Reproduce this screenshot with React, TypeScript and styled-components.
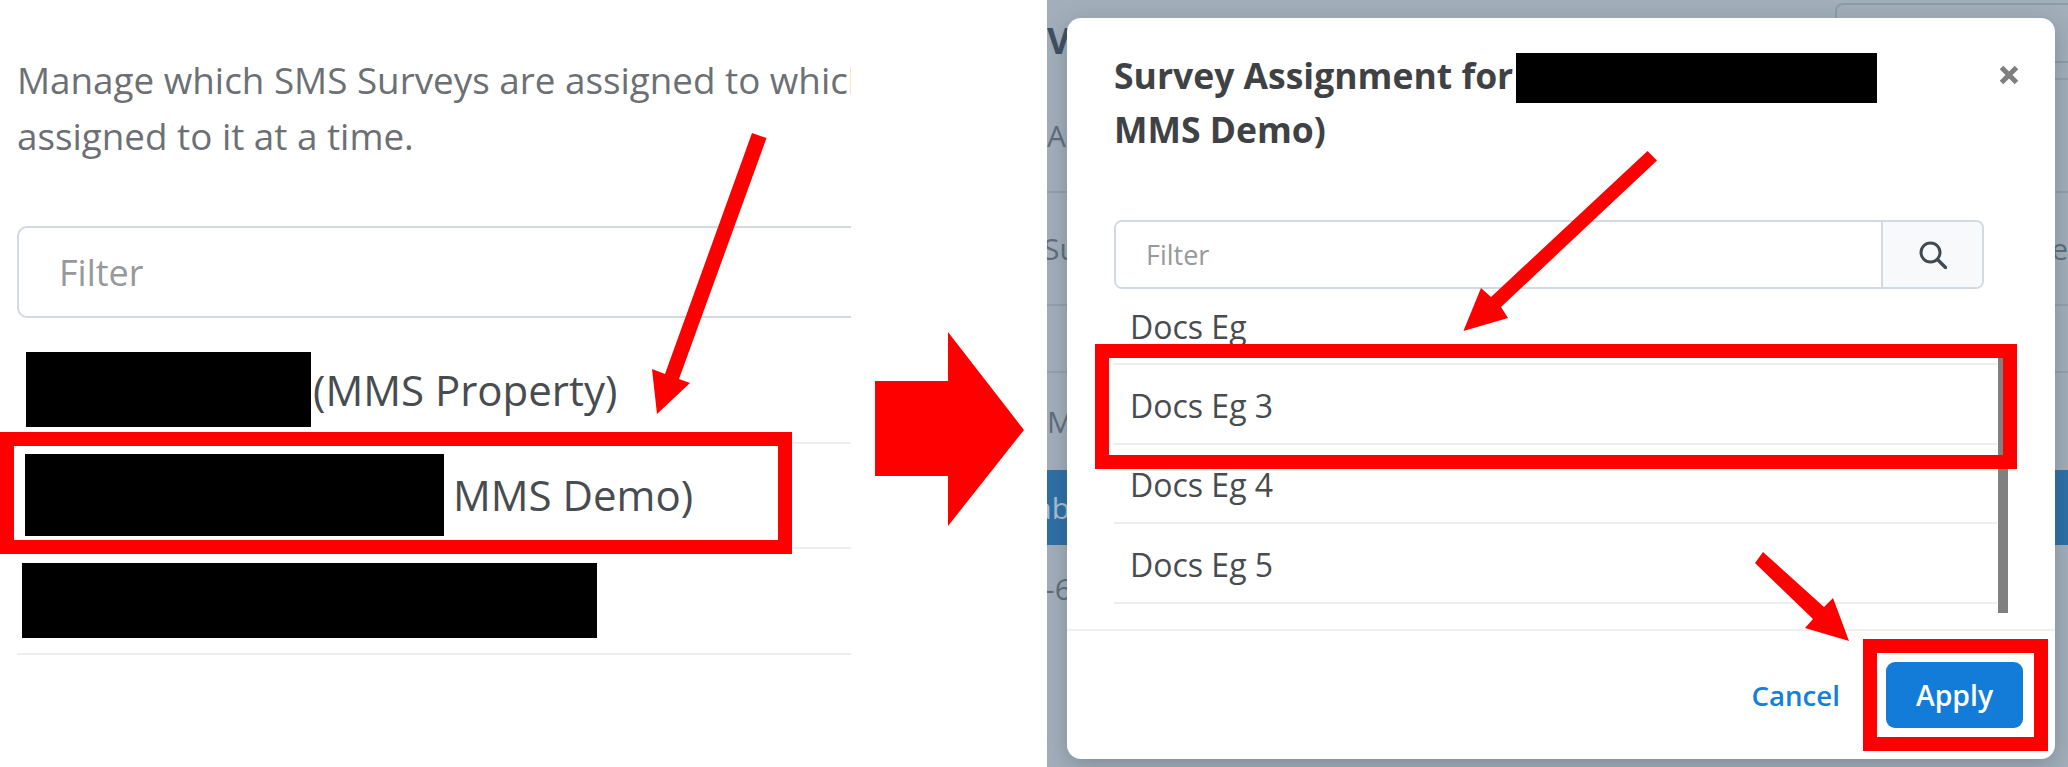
import React from "react";
import styled, { createGlobalStyle } from "styled-components";

const Global = createGlobalStyle`
  html, body { margin: 0; padding: 0; background: #fff; }
  * { box-sizing: border-box; }
  input::placeholder { opacity: 1; color: #97999b; }
`;

const Page = styled.div`
  position: relative;
  display: flex;
  width: 2068px;
  height: 767px;
  overflow: hidden;
  background: #fff;
  font-family: "Open Sans", "Noto Sans", sans-serif;
`;

const LeftPane = styled.section`
  width: 851px;
  flex: none;
  padding: 52px 0 0 17px;
  overflow: hidden;
`;

const Intro = styled.p`
  margin: 0 0 62px;
  font-size: 36.8px;
  line-height: 56px;
  color: #6c7075;
  white-space: nowrap;
`;

const WideFilter = styled.input`
  display: block;
  width: 900px;
  height: 92px;
  padding: 0 0 0 40px;
  border: 2px solid #d3d9e0;
  border-radius: 10px;
  background: #fff;
  font: 400 36px "Open Sans", sans-serif;
  outline: none;
`;

const PropertyList = styled.div`
  margin-top: 21px;
`;

const PropertyRow = styled.div<{ $height: number; $inset: number; $gap: number }>`
  position: relative;
  display: flex;
  align-items: center;
  gap: ${(p) => p.$gap}px;
  height: ${(p) => p.$height}px;
  padding: 0 0 2px ${(p) => p.$inset}px;
  border-bottom: 2px solid #eceef0;
  font-size: 42px;
  color: #484c50;
  white-space: nowrap;
`;

const Redacted = styled.span<{ $w: number; $h: number }>`
  display: inline-block;
  flex: none;
  width: ${(p) => p.$w}px;
  height: ${(p) => p.$h}px;
  background: #000;
`;

const Highlight = styled.div<{ $l: number; $t: number; $w: number; $h: number }>`
  position: absolute;
  left: ${(p) => p.$l}px;
  top: ${(p) => p.$t}px;
  width: ${(p) => p.$w}px;
  height: ${(p) => p.$h}px;
  border: 14px solid #ff0000;
  pointer-events: none;
`;

const ArrowSlot = styled.div`
  width: 196px;
  flex: none;
  padding: 332px 0 0 24px;
`;

const RightPane = styled.section`
  position: relative;
  flex: 1;
  overflow: hidden;
  background: #a2afba;
`;

const BackRow = styled.div<{ $h: number; $rule?: boolean; $band?: boolean }>`
  display: flex;
  align-items: center;
  justify-content: space-between;
  height: ${(p) => p.$h}px;
  font-size: 30px;
  white-space: nowrap;
  color: ${(p) => (p.$band ? "#a9bfd2" : "#5f6e7b")};
  background: ${(p) => (p.$band ? "#2e70a6" : "transparent")};
  border-bottom: ${(p) => (p.$rule ? "2px solid #93a1ad" : "0")};
`;

const BackHeading = styled.span`
  font-size: 36px;
  font-weight: 700;
  color: #3e5062;
`;

const HeaderRuleRow = styled.div`
  position: relative;
  display: flex;
  align-items: center;
  height: 80px;
`;

const HeaderRule = styled.span`
  margin-left: auto;
  align-self: flex-end;
  width: 20px;
  height: 2px;
  background: #93a1ad;
`;

const BackOutline = styled.span`
  position: absolute;
  left: 788px;
  top: 3px;
  width: 300px;
  height: 60px;
  border: 2px solid #8d9ca9;
  border-radius: 8px;
`;

const ClippedGlyph = styled.span<{ $shift: number }>`
  margin-left: ${(p) => p.$shift}px;
`;

const Dialog = styled.div`
  position: absolute;
  left: 20px;
  top: 18px;
  width: 988px;
  height: 741px;
  display: flex;
  flex-direction: column;
  border-radius: 14px;
  background: #fff;
  box-shadow: 0 6px 22px rgba(40, 55, 70, 0.28);
  overflow: hidden;
`;

const DialogHeader = styled.header`
  display: flex;
  justify-content: space-between;
  align-items: flex-start;
  height: 202px;
  padding: 31px 35px 0 47px;
`;

const Title = styled.h2`
  margin: 0;
  font-size: 35.5px;
  font-weight: 700;
  line-height: 53px;
  color: #3f4245;
  white-space: nowrap;
`;

const TitleRedaction = styled(Redacted)`
  margin-left: 3px;
  margin-top: -4px;
  vertical-align: middle;
`;

const Close = styled.button`
  display: flex;
  margin: 15px 0 0;
  padding: 0;
  border: 0;
  background: none;
  color: #7f7f7f;
`;

const FilterGroup = styled.div`
  display: flex;
  flex: none;
  width: 870px;
  height: 69px;
  margin-left: 47px;
  border: 2px solid #d3d9e0;
  border-radius: 8px;
  overflow: hidden;
`;

const GroupInput = styled.input`
  flex: 1;
  min-width: 0;
  padding: 0 0 0 30px;
  border: 0;
  outline: none;
  background: #fff;
  font: 400 27px "Open Sans", sans-serif;
`;

const SearchAddon = styled.span`
  display: flex;
  align-items: center;
  justify-content: center;
  width: 101px;
  flex: none;
  border-left: 2px solid #d3d9e0;
  background: #f8f9fa;
  color: #3f4a52;
`;

const SurveyArea = styled.div`
  position: relative;
  flex: none;
  height: 340px;
  padding: 0 58px 0 47px;
  overflow: hidden;
`;

const SurveyRow = styled.div<{ $first?: boolean }>`
  position: relative;
  display: flex;
  align-items: center;
  height: 79.4px;
  margin-top: ${(p) => (p.$first ? "-3px" : "0")};
  padding: 3px 0 0 16px;
  border-bottom: 2px solid #eceef0;
  font-size: 32px;
  color: #484c50;
`;

const ScrollThumb = styled.div`
  position: absolute;
  left: 931px;
  top: 69px;
  width: 10px;
  height: 255px;
  background: #808080;
`;

const DialogFooter = styled.footer`
  display: flex;
  flex: 1;
  align-items: center;
  justify-content: flex-end;
  gap: 46px;
  padding-right: 32px;
  border-top: 2px solid #eef0f2;
`;

const CancelLink = styled.a`
  font-size: 27.7px;
  font-weight: 600;
  color: #1580d8;
`;

const ApplyButton = styled.button`
  position: relative;
  width: 137px;
  height: 66px;
  padding: 0;
  border: 0;
  border-radius: 9px;
  background: #137cd8;
  color: #fff;
  font: 600 28.4px "Open Sans", sans-serif;
`;

const Callouts = styled.svg`
  position: absolute;
  left: 0;
  top: 0;
  width: 2068px;
  height: 767px;
  pointer-events: none;
`;

const calloutArrows = [
  "752,133 766.5,138 679,379 690,383 657,414 652,369 665,374",
  "1647.5,151 1657,160.5 1501,307 1508,318 1463.4,331 1481,288 1491,297",
  "1763,552 1824,607 1833,598 1849,641 1805,628 1813,619 1755,563",
];

export default function App() {
  return (
    <Page>
      <Global />
      <LeftPane>
        <Intro>
          Manage which SMS Surveys are assigned to which
          <br />
          assigned to it at a time.
        </Intro>
        <WideFilter placeholder="Filter" readOnly />
        <PropertyList>
          <PropertyRow $height={105} $inset={9} $gap={2}>
            <Redacted $w={285} $h={75} />
            (MMS Property)
          </PropertyRow>
          <PropertyRow $height={105} $inset={8} $gap={9}>
            <Redacted $w={419} $h={82} />
            MMS Demo)
            <Highlight $l={-17} $t={-12} $w={792} $h={122} />
          </PropertyRow>
          <PropertyRow $height={106} $inset={5} $gap={0}>
            <Redacted $w={575} $h={75} />
          </PropertyRow>
        </PropertyList>
      </LeftPane>

      <ArrowSlot>
        <svg width="149" height="194" viewBox="0 0 149 194">
          <polygon points="0,49 73,49 73,0 149,98 73,194 73,144 0,144" fill="#ff0000" />
        </svg>
      </ArrowSlot>

      <RightPane>
        <HeaderRuleRow>
          <BackHeading>V</BackHeading>
          <HeaderRule />
          <BackOutline />
        </HeaderRuleRow>
        <BackRow $h={113} $rule>Ar</BackRow>
        <BackRow $h={113} $rule>
          <ClippedGlyph $shift={-4}>Su</ClippedGlyph>
          <span>e</span>
        </BackRow>
        <BackRow $h={67} $rule />
        <BackRow $h={97}>M</BackRow>
        <BackRow $h={75} $band>
          <ClippedGlyph $shift={-12}>ab</ClippedGlyph>
        </BackRow>
        <BackRow $h={86}>
          <ClippedGlyph $shift={-2}>-6</ClippedGlyph>
        </BackRow>

        <Dialog>
          <DialogHeader>
            <Title>
              Survey Assignment for
              <TitleRedaction $w={361} $h={50} />
              <br />
              MMS Demo)
            </Title>
            <Close aria-label="Close">
              <svg width="22" height="22" viewBox="0 0 22 22">
                <path d="M3.5 3.5 L18.5 18.5 M18.5 3.5 L3.5 18.5" stroke="currentColor" strokeWidth="5" fill="none" />
              </svg>
            </Close>
          </DialogHeader>
          <FilterGroup>
            <GroupInput placeholder="Filter" readOnly />
            <SearchAddon>
              <svg width="28" height="28" viewBox="0 0 28 28" fill="none" stroke="currentColor">
                <circle cx="11.5" cy="11.5" r="9.5" strokeWidth="3" />
                <path d="M18.5 18.5 L26.5 26.5" strokeWidth="3.4" strokeLinecap="round" />
              </svg>
            </SearchAddon>
          </FilterGroup>
          <SurveyArea>
            <ScrollThumb />
            <SurveyRow $first>Docs Eg</SurveyRow>
            <SurveyRow>
              Docs Eg 3
              <Highlight $l={-19} $t={-21} $w={922} $h={125} />
            </SurveyRow>
            <SurveyRow>Docs Eg 4</SurveyRow>
            <SurveyRow>Docs Eg 5</SurveyRow>
          </SurveyArea>
          <DialogFooter>
            <CancelLink>Cancel</CancelLink>
            <ApplyButton>
              Apply
              <Highlight $l={-23} $t={-23} $w={185} $h={112} />
            </ApplyButton>
          </DialogFooter>
        </Dialog>
      </RightPane>

      <Callouts viewBox="0 0 2068 767">
        {calloutArrows.map((points) => (
          <polygon key={points} points={points} fill="#ff0000" />
        ))}
      </Callouts>
    </Page>
  );
}
